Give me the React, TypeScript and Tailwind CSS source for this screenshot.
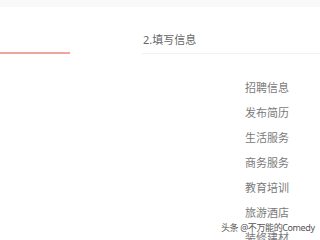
const items = ["招聘信息", "发布简历", "生活服务", "商务服务", "教育培训", "旅游酒店", "装修建材"];

export default function App() {
	return (
		<div
			className="relative h-[240px] w-[320px] overflow-hidden bg-white text-[#777]"
			style={{ fontFamily: '"Noto Sans", "Noto Sans CJK SC", sans-serif' }}
		>
			<div className="h-[7px] bg-[#f9f9f9]" />

			<div className="flex h-[47px] items-end">
				<div className="h-[2px] w-[70px] bg-[#f4a39c]" />
				<div className="ml-[72px] flex flex-1 flex-col">
					<span className="pl-[1px] text-[11px] leading-[14px] text-[#666]">2.填写信息</span>
					<div className="mt-[6px] h-[1px] bg-[#f2f2f2]" />
				</div>
			</div>

			<ul className="flex flex-col items-end pr-[31px] pt-[27px]">
				{items.map((item) => (
					<li key={item} className="h-[25px] text-[11px] leading-[14px] text-[#7a7a7a]">
						{item}
					</li>
				))}
			</ul>

			<div
				className="absolute left-[221px] top-[222px] whitespace-nowrap text-[9px] leading-[12px] tracking-[-0.4px] text-[#555]"
				style={{ textShadow: "0 0 2px #fff, 0 0 2px #fff" }}
			>
				头条 @不万能的Comedy
			</div>
		</div>
	);
}
